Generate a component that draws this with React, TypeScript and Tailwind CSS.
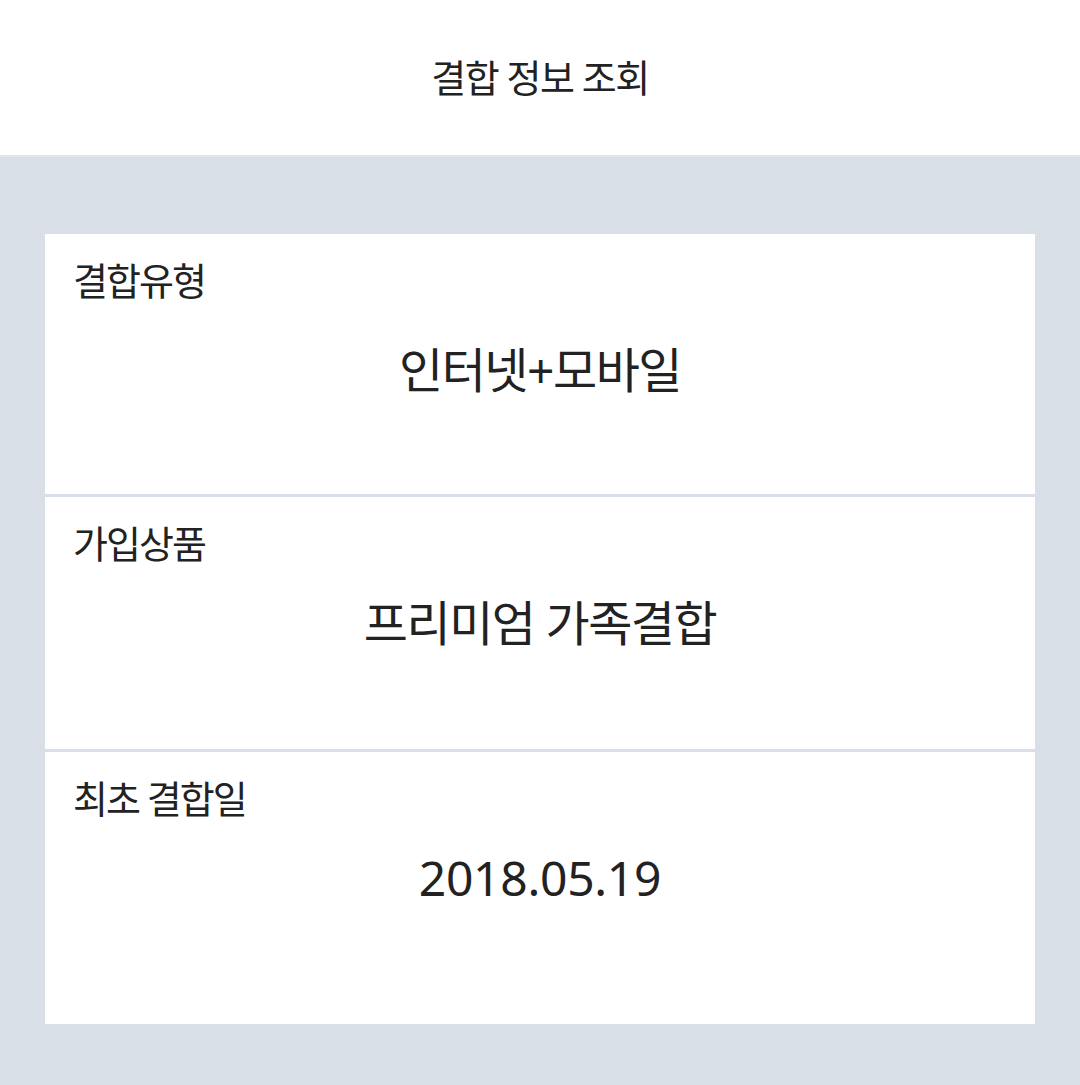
import React from "react";

const font = { fontFamily: '"Noto Sans", "Noto Sans CJK KR", sans-serif' };

function Section({ label, value, h, gap, track }: { label: string; value: string; h: string; gap: string; track: string }) {
  return (
    <div className={`bg-white px-[28px] pt-[22px] flex flex-col ${h}`}>
      <div className="text-[38px] leading-[48px] tracking-[-2px] text-[#222222]">{label}</div>
      <div className={`text-center text-[48px] leading-[60px] text-[#222222] ${track} ${gap}`}>{value}</div>
    </div>
  );
}

export default function App() {
  return (
    <div className="w-[1080px] h-[1085px] bg-[#d9dfe6] flex flex-col" style={font}>
      <div className="h-[157px] bg-white border-b-2 border-[#e3e6ea] flex items-center justify-center">
        <span className="text-[38px] tracking-[-1.5px] text-[#222222]">결합 정보 조회</span>
      </div>
      <div className="px-[45px] pt-[77px] flex flex-col gap-[3px]">
        <Section label="결합유형" value="인터넷+모바일" h="h-[260px]" gap="mt-[36px]" track="tracking-[-1.5px]" />
        <Section label="가입상품" value="프리미엄 가족결합" h="h-[252px]" gap="mt-[26px]" track="tracking-[-1.5px]" />
        <Section label="최초 결합일" value="2018.05.19" h="h-[272px]" gap="mt-[26px]" track="tracking-[-0.3px]" />
      </div>
    </div>
  );
}
